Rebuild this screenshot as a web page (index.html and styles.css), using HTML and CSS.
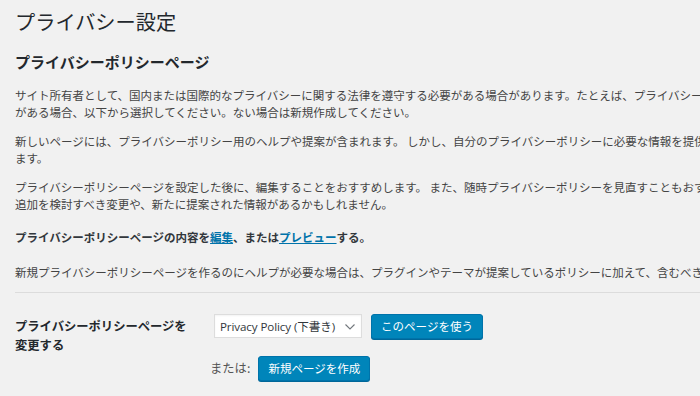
FILE: index.html
```html
<!DOCTYPE html>
<html lang="ja">
<head>
<meta charset="utf-8">
<title>プライバシー設定</title>
<link rel="stylesheet" href="styles.css">
</head>
<body>
<div class="wrap">
  <h1 class="title">プライバシー設定</h1>
  <h2 class="subtitle">プライバシーポリシーページ</h2>
  <p class="p1">サイト所有者として、国内または国際的なプライバシーに関する法律を遵守する必要がある場合があります。たとえば、プライバシーポリシーを作成して表示する必要<br>がある場合、以下から選択してください。ない場合は新規作成してください。</p>
  <p class="p2">新しいページには、プライバシーポリシー用のヘルプや提案が含まれます。 しかし、自分のプライバシーポリシーに必要な情報を提供することはサイト所有者の責任となり<br>ます。</p>
  <p class="p3">プライバシーポリシーページを設定した後に、編集することをおすすめします。 また、随時プライバシーポリシーを見直すこともおすすめします。特に、プラグインをインストール・更新した後は<br>追加を検討すべき変更や、新たに提案された情報があるかもしれません。</p>
  <p class="p4"><strong>プライバシーポリシーページの内容を<a href="#">編集</a>、または<a href="#">プレビュー</a>する。</strong></p>
  <p class="p5">新規プライバシーポリシーページを作るのにヘルプが必要な場合は、プラグインやテーマが提案しているポリシーに加えて、含むべき内容のガイドを確認してください。</p>
  <hr class="sep">
  <div class="setting">
    <div class="label">プライバシーポリシーページを<br>変更する</div>
    <div class="controls">
      <div class="ctrl-row first">
        <span class="select">
          <span class="select-text">Privacy Policy (下書き)</span>
          <svg class="chev" width="10" height="6" viewBox="0 0 10 6"><path d="M0.5 0.5 L5 5 L9.5 0.5" fill="none" stroke="#72777c" stroke-width="1.1"/></svg>
        </span>
        <button class="btn btn-use">このページを使う</button>
      </div>
      <div class="ctrl-row second">
        <span class="or">または:</span>
        <button class="btn btn-new">新規ページを作成</button>
      </div>
    </div>
  </div>
</div>
</body>
</html>
```
FILE: styles.css
```css
html, body {
  margin: 0;
  padding: 0;
}
body {
  background: #f1f1f1;
  color: #444;
  font-family: "Noto Sans CJK JP", "Noto Sans", sans-serif;
  font-size: 11.5px;
  line-height: 17px;
  overflow: hidden;
  width: 700px;
  height: 396px;
}
.wrap {
  padding: 9px 0 0 15px;
  width: 1000px;
}
.title {
  margin: 0;
  font-size: 20.2px;
  font-weight: 400;
  line-height: 26px;
  color: #23282d;
}
.subtitle {
  margin: 17px 0 0;
  font-size: 15px;
  font-weight: 700;
  line-height: 20px;
  color: #23282d;
}
p {
  margin: 12px 0 0;
  white-space: nowrap;
}
.p1 { margin-top: 14.5px; }
.p4 { margin-top: 16px; }
.p5 { margin-top: 18px; }
strong {
  font-weight: 700;
  color: #32373c;
}
a {
  color: #0073aa;
  text-decoration: underline;
}
.sep {
  margin: 11px 0 0;
  border: 0;
  border-top: 1px solid #dcdcdc;
  width: 900px;
  height: 0;
}
.setting {
  display: flex;
  margin-top: 21px;
}
.label {
  width: 195px;
  font-size: 12.3px;
  line-height: 19px;
  font-weight: 700;
  color: #23282d;
  padding-top: 3.5px;
}
.controls {
  display: flex;
  flex-direction: column;
  gap: 17px;
}
.ctrl-row {
  display: flex;
  align-items: center;
}
.first {
  margin-left: 4px;
  gap: 9px;
}
.second {
  gap: 8px;
}
.select {
  position: relative;
  display: flex;
  align-items: center;
  box-sizing: border-box;
  width: 148px;
  height: 24px;
  background: #fff;
  border: 1px solid #ddd;
  box-shadow: inset 0 1px 2px rgba(0,0,0,0.05);
  padding-left: 5px;
  font-family: "Open Sans", "Noto Sans CJK JP", sans-serif;
  font-size: 11.6px;
  letter-spacing: -0.1px;
  color: #32373c;
  white-space: nowrap;
}
.chev {
  position: absolute;
  right: 6px;
  top: 9px;
}
.btn {
  box-sizing: border-box;
  height: 25px;
  padding: 0;
  border: 1px solid #0073aa;
  border-radius: 3px;
  background: #0085ba;
  box-shadow: 0 1px 0 #006799;
  color: #fff;
  font-family: "Noto Sans CJK JP", sans-serif;
  font-size: 11.5px;
  line-height: 23px;
  white-space: nowrap;
  text-align: center;
}
.btn-use { width: 112px; }
.btn-new { width: 112px; }
.or {
  font-size: 12.3px;
  color: #555;
}
```
